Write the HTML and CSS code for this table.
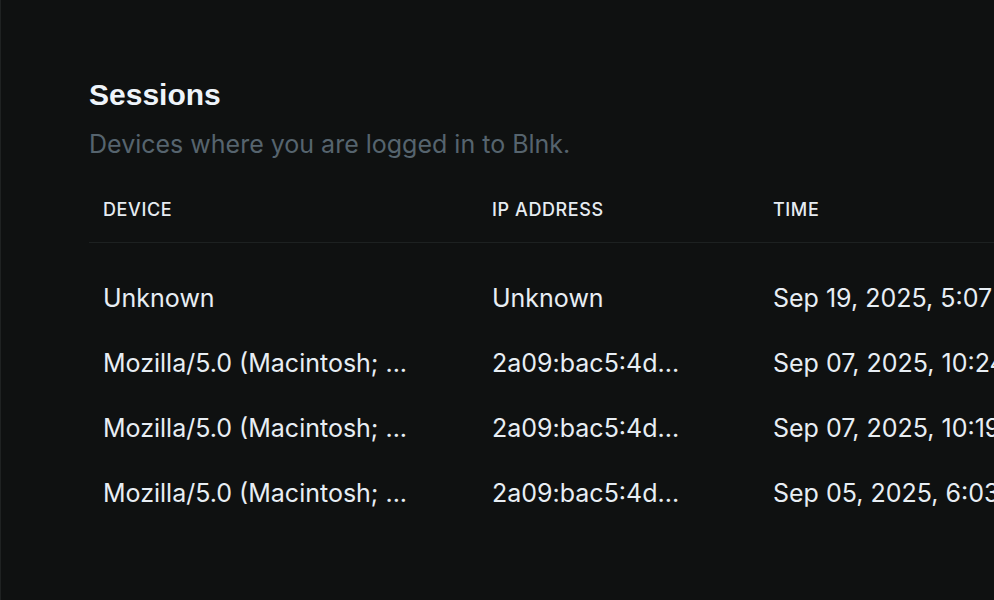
FILE: index.html
```html
<!DOCTYPE html>
<html>
<head>
<meta charset="utf-8">
<link rel="stylesheet" href="styles.css">
</head>
<body>
<div class="app">
  <main class="main">
    <section class="sessions">
      <h1 class="title">Sessions</h1>
      <p class="subtitle">Devices where you are logged in to Blnk.</p>
      <table class="table">
        <thead>
          <tr>
            <th class="col-device">Device</th>
            <th class="col-ip">IP Address</th>
            <th class="col-time">Time</th>
          </tr>
        </thead>
        <tbody>
          <tr><td>Unknown</td><td>Unknown</td><td>Sep 19, 2025, 5:07 PM</td></tr>
          <tr><td>Mozilla/5.0 (Macintosh; ...</td><td>2a09:bac5:4d...</td><td>Sep 07, 2025, 10:24 AM</td></tr>
          <tr><td>Mozilla/5.0 (Macintosh; ...</td><td>2a09:bac5:4d...</td><td>Sep 07, 2025, 10:19 AM</td></tr>
          <tr><td>Mozilla/5.0 (Macintosh; ...</td><td>2a09:bac5:4d...</td><td>Sep 05, 2025, 6:03 PM</td></tr>
        </tbody>
      </table>
    </section>
  </main>
</div>
</body>
</html>
```
FILE: styles.css
```css
html, body {
  margin: 0;
  padding: 0;
  background: #0f1111;
  height: 100%;
  overflow: hidden;
}
.app {
  height: 600px;
  width: 994px;
  border-left: 1px solid #1f2222;
  box-sizing: border-box;
  overflow: hidden;
  font-family: Inter, "Noto Sans", sans-serif;
}
.main {
  padding: 76px 0 0 88px;
}
.title {
  margin: 0;
  font-family: "Liberation Sans", Arial, sans-serif;
  font-size: 30px;
  font-weight: 700;
  color: #eef4fa;
  line-height: 38px;
}
.subtitle {
  margin: 13px 0 0 0;
  font-size: 25px;
  line-height: 34px;
  color: #56646e;
}
.table {
  margin-top: 16px;
  border-collapse: collapse;
  width: 1150px;
  table-layout: fixed;
}
.table th {
  text-align: left;
  font-size: 18px;
  font-weight: 500;
  letter-spacing: 0.6px;
  text-transform: uppercase;
  color: #e6ecf2;
  padding: 0 14px;
  height: 65px;
  border-bottom: 1px solid #1d2121;
}
.col-device { width: 361px; }
.col-ip { width: 253px; }
.table tbody tr:first-child td { padding-top: 22px; }
.table td {
  font-size: 25px;
  color: #e8eef4;
  padding: 0 14px;
  height: 65px;
  white-space: nowrap;
}
```
